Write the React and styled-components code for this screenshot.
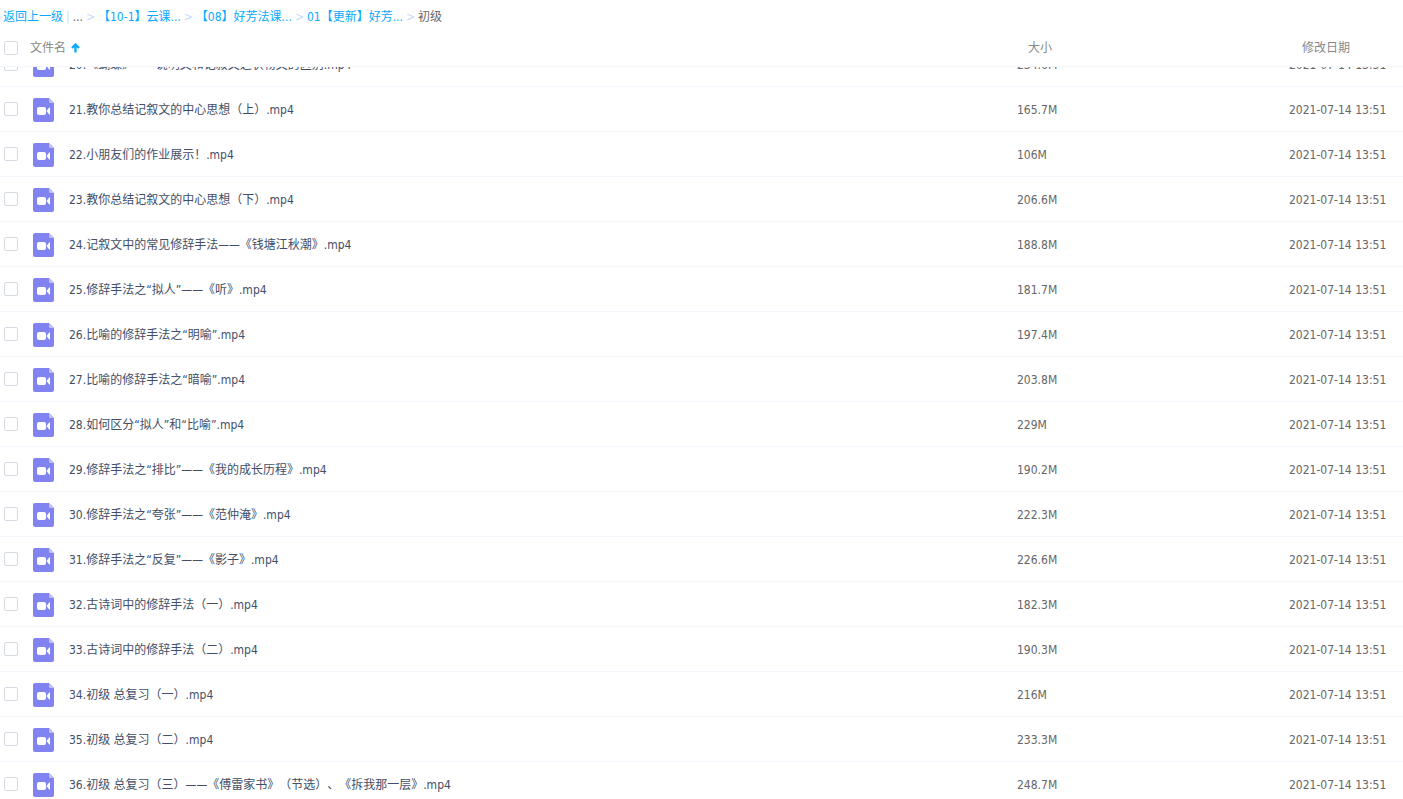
import React, { useLayoutEffect, useRef, useState } from 'react';
import styled, { createGlobalStyle } from 'styled-components';

const files = [
  { name: '20.《蝴蝶》——说明文和记叙文之状物文的区别.mp4', size: '234.6M' },
  { name: '21.教你总结记叙文的中心思想（上）.mp4', size: '165.7M' },
  { name: '22.小朋友们的作业展示！.mp4', size: '106M' },
  { name: '23.教你总结记叙文的中心思想（下）.mp4', size: '206.6M' },
  { name: '24.记叙文中的常见修辞手法——《钱塘江秋潮》.mp4', size: '188.8M' },
  { name: '25.修辞手法之“拟人”——《听》.mp4', size: '181.7M' },
  { name: '26.比喻的修辞手法之“明喻”.mp4', size: '197.4M' },
  { name: '27.比喻的修辞手法之“暗喻”.mp4', size: '203.8M' },
  { name: '28.如何区分“拟人”和“比喻”.mp4', size: '229M' },
  { name: '29.修辞手法之“排比”——《我的成长历程》.mp4', size: '190.2M' },
  { name: '30.修辞手法之“夸张”——《范仲淹》.mp4', size: '222.3M' },
  { name: '31.修辞手法之“反复”——《影子》.mp4', size: '226.6M' },
  { name: '32.古诗词中的修辞手法（一）.mp4', size: '182.3M' },
  { name: '33.古诗词中的修辞手法（二）.mp4', size: '190.3M' },
  { name: '34.初级 总复习（一）.mp4', size: '216M' },
  { name: '35.初级 总复习（二）.mp4', size: '233.3M' },
  { name: '36.初级 总复习（三）——《傅雷家书》（节选）、《拆我那一层》.mp4', size: '248.7M' },
];

const modified = '2021-07-14 13:51';
const crumbs = ['【10-1】云课...', '【08】好芳法课...', '01【更新】好芳...'];

const VideoIcon = () => (
  <FileSvg viewBox="0 0 21 24" aria-hidden="true">
    <path d="M2 0H16L21 5V22Q21 24 19 24H2Q0 24 0 22V2Q0 0 2 0Z" fill="#8183f1" />
    <path d="M16 0L21 5H17.5Q16 5 16 3.5Z" fill="#c0c1f8" />
    <rect x="4" y="9" width="9" height="8" rx="2" fill="#fff" />
    <path d="M13.5 13L16.2 9.4Q17 9 17 10V16Q17 17 16.2 16.6Z" fill="#fff" />
  </FileSvg>
);

const App = () => {
  const scrollRef = useRef(null);
  const [checked, setChecked] = useState([]);

  useLayoutEffect(() => {
    scrollRef.current.scrollTop = 25;
  }, []);

  const toggle = (name) => {
    setChecked(checked.includes(name) ? checked.filter((n) => n !== name) : [...checked, name]);
  };

  const toggleAll = () => {
    setChecked(checked.length === files.length ? [] : files.map((f) => f.name));
  };

  return (
    <Page>
      <GlobalStyle />
      <Breadcrumb aria-label="路径">
        <Crumb href="#up">返回上一级</Crumb>
        <Divider>|</Divider>
        <Current>...</Current>
        {crumbs.map((crumb) => (
          <React.Fragment key={crumb}>
            <Arrow>&gt;</Arrow>
            <Crumb href="#folder">{crumb}</Crumb>
          </React.Fragment>
        ))}
        <Arrow>&gt;</Arrow>
        <Current>初级</Current>
      </Breadcrumb>
      <Scroller ref={scrollRef}>
        <Table>
          <colgroup>
            <col />
            <SizeCol />
            <DateCol />
          </colgroup>
          <thead>
            <tr>
              <Th>
                <NameWrap>
                  <Checkbox
                    aria-label="全选"
                    checked={checked.length === files.length}
                    onChange={toggleAll}
                  />
                  <SortButton type="button">
                    文件名
                    <svg width="9" height="10" viewBox="0 0 9 10" aria-hidden="true">
                      <path d="M4.5 9.5V2M1 5L4.5 1.5L8 5" fill="none" stroke="#09aaff" strokeWidth="2.3" />
                    </svg>
                  </SortButton>
                </NameWrap>
              </Th>
              <Th $indent={11}>大小</Th>
              <Th $indent={13}>修改日期</Th>
            </tr>
          </thead>
          <tbody>
            {files.map((file) => (
              <tr key={file.name}>
                <Td>
                  <NameWrap>
                    <Checkbox
                      id={file.name}
                      checked={checked.includes(file.name)}
                      onChange={() => toggle(file.name)}
                    />
                    <VideoIcon />
                    <FileName htmlFor={file.name}>{file.name}</FileName>
                  </NameWrap>
                </Td>
                <Td>{file.size}</Td>
                <Td>{modified}</Td>
              </tr>
            ))}
          </tbody>
        </Table>
      </Scroller>
    </Page>
  );
};

const GlobalStyle = createGlobalStyle`
  * {
    box-sizing: border-box;
  }
  body {
    margin: 0;
    background: #fff;
    color: #666;
    font-family: 'DejaVu Sans Condensed', 'Noto Sans CJK SC', sans-serif;
    font-size: 12px;
    line-height: 18px;
    text-spacing-trim: space-all;
  }
`

const Page = styled.div`
  display: flex;
  flex-direction: column;
  height: 100vh;
`

const Breadcrumb = styled.nav`
  display: flex;
  flex: none;
  align-items: center;
  height: 34px;
  padding-left: 3px;
  white-space: pre;
`

const Crumb = styled.a`
  color: #09aaff;
  text-decoration: none;
`

const Divider = styled.span`
  margin: 0 3px;
  color: #c4dbfe;
`

const Arrow = styled.span`
  margin: 0 3px;
  color: #c4dbfe;
`

const Current = styled.span`
  color: #666;
`

const Scroller = styled.main`
  flex: 1;
  min-height: 0;
  overflow-y: auto;
  scrollbar-width: none;
`

const Table = styled.table`
  width: 100%;
  table-layout: fixed;
  border-collapse: separate;
  border-spacing: 0;
`

const SizeCol = styled.col`
  width: 272px;
`

const DateCol = styled.col`
  width: 114px;
`

const Th = styled.th`
  position: sticky;
  top: 0;
  z-index: 1;
  height: 33px;
  padding: 0 0 4px ${(props) => props.$indent || 0}px;
  background: #fff;
  border-bottom: 1px solid #f2f6fd;
  color: #888;
  font-weight: normal;
  text-align: left;
`

const Td = styled.td`
  height: 45px;
  padding: 2px 0 0;
  border-bottom: 1px solid #f2f6fd;
  white-space: nowrap;
`

const NameWrap = styled.div`
  display: flex;
  align-items: center;
  padding-left: 4px;
`

const Checkbox = styled.input.attrs({ type: 'checkbox' })`
  flex: none;
  appearance: none;
  width: 14px;
  height: 14px;
  margin: 0;
  border: 1px solid #d5dae3;
  border-radius: 2px;
  background: #fff;
  td & {
    margin-bottom: 2px;
  }
  &:checked {
    background: #09aaff;
    border-color: #09aaff;
  }
`

const SortButton = styled.button`
  display: flex;
  align-items: center;
  gap: 5px;
  margin-left: 12px;
  padding: 0;
  border: none;
  background: none;
  color: #888;
  font: inherit;
`

const FileSvg = styled.svg`
  flex: none;
  width: 21px;
  height: 24px;
  margin: 0 15px;
`

const FileName = styled.label`
  overflow: hidden;
  color: #424e67;
  text-overflow: ellipsis;
`

export default App;
